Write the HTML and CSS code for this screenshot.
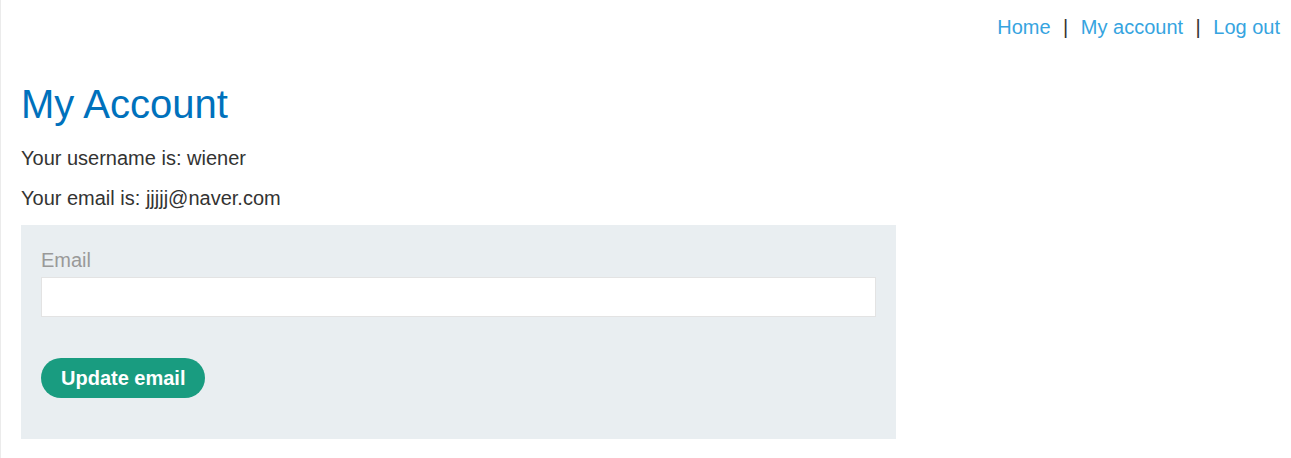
FILE: index.html
```html
<!DOCTYPE html>
<html lang="en">
<head>
    <meta charset="UTF-8" />
    <meta name="viewport" content="width=device-width, initial-scale=1.0" />
    <title>My Account</title>
    <link rel="stylesheet" href="styles.css">
</head>
<body>
    <div id="page">
        <!-- Top navigation -->
        <header class="top-links">
            <a href="#">Home</a>
            <span class="sep">|</span>
            <a href="#">My account</a>
            <span class="sep">|</span>
            <a href="#">Log out</a>
        </header>

        <div id="content">
            <h1>My Account</h1>
            <p id="user-line">Your username is: wiener</p>
            <p id="email-line">Your email is: <span id="user-email">jjjjj@naver.com</span></p>

            <!-- Change email form -->
            <form class="login-form" onsubmit="return false">
                <label for="email">Email</label>
                <input id="email" type="email" name="email">
                <button class="button" type="submit">Update email</button>
            </form>
        </div>
    </div>
</body>
</html>
```
FILE: styles.css
```css
html, body {
    margin: 0;
    padding: 0;
    height: 100%;
    font-family: "Liberation Sans", Arial, sans-serif;
    font-size: 20px;
    line-height: 23px;
    color: #333332;
    background: #fff;
}

#page {
    min-height: 100%;
    border-left: 1px solid #ebebeb;
    box-sizing: border-box;
}

/* Nav links on the top right */
.top-links {
    display: flex;
    justify-content: flex-end;
    padding: 16px 11px 0 0;
}

.top-links a {
    color: #36a4df;
    text-decoration: none;
}

.top-links .sep {
    padding: 0 12.5px;
    color: #333332;
}

#content {
    padding: 0 20px;
}

h1 {
    margin: 42px 0 0 0;
    font-size: 40px;
    line-height: 46px;
    font-weight: normal;
    color: #0071bc;
}

#user-line {
    margin: 20px 0 0 0;
}

#email-line {
    margin: 17px 0 0 0;
}

/* Form block */
.login-form {
    width: 875px;
    box-sizing: border-box;
    margin-top: 15px;
    padding: 24px 20px 41px 20px;
    background-color: #e9eef1;
    display: flex;
    flex-direction: column;
    align-items: flex-start;
}

.login-form label {
    color: #999;
}

.login-form input {
    width: 100%;
    height: 40px;
    box-sizing: border-box;
    margin-top: 5px;
    border: 1px solid #e3e3e3;
    background: #fff;
    font-family: inherit;
    font-size: 20px;
    padding: 0 10px;
}

.button {
    margin-top: 41px;
    height: 40px;
    padding: 0 20px;
    border: none;
    border-radius: 20px;
    background-color: #199c80;
    color: #fff;
    font-family: inherit;
    font-size: 20px;
    font-weight: bold;
    cursor: pointer;
}
```
